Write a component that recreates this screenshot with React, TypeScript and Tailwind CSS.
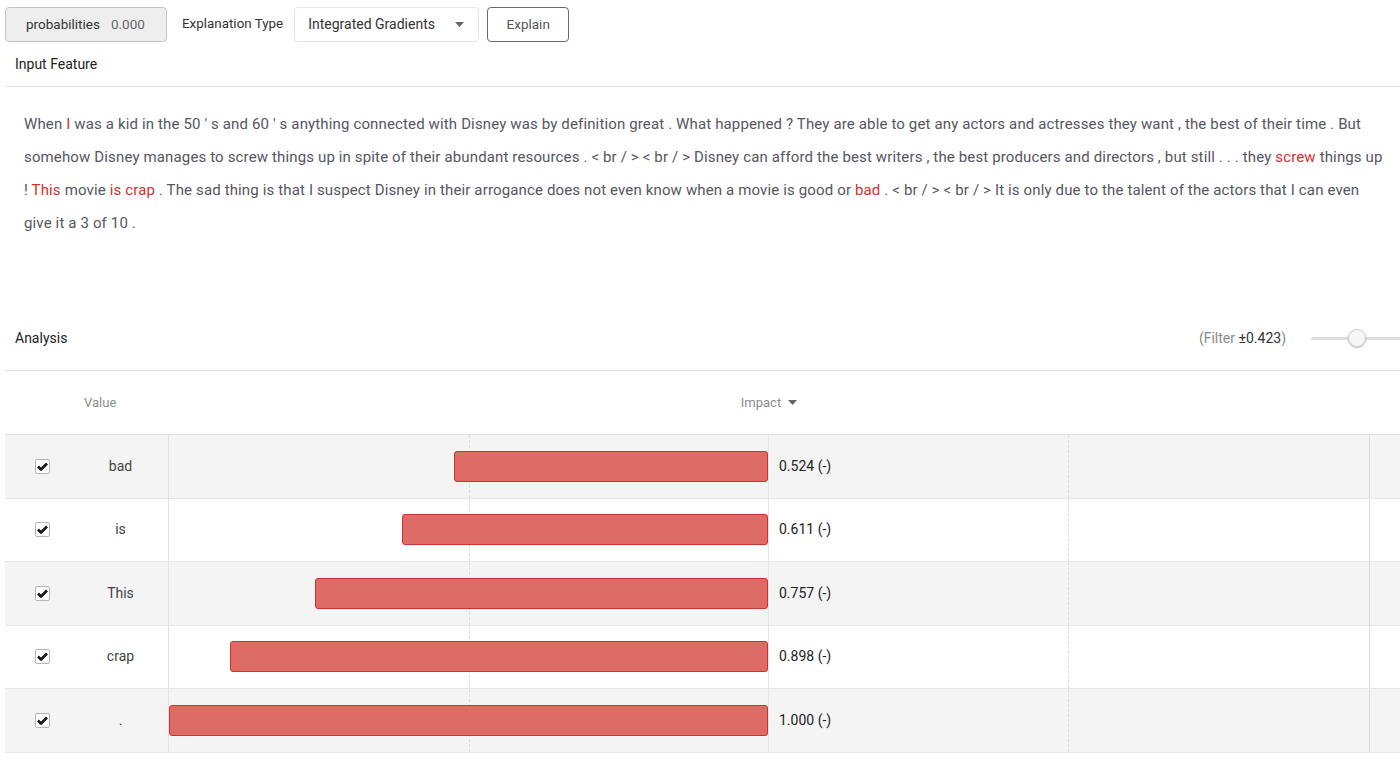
import React from "react";

const font = { fontFamily: "Roboto, 'Noto Sans', sans-serif" };

const rows = [
  { token: "bad", value: 0.524 },
  { token: "is", value: 0.611 },
  { token: "This", value: 0.757 },
  { token: "crap", value: 0.898 },
  { token: ".", value: 1.0 },
];

// words of the review; red ones carry weight
const text: [string, boolean][] = [
  ["When", false],
  ["I", true],
  ["was a kid in the 50 ' s and 60 ' s anything connected with Disney was by definition great . What happened ? They are able to get any actors and actresses they want , the best of their time . But somehow Disney manages to screw things up in spite of their abundant resources . < br / > < br / > Disney can afford the best writers , the best producers and directors , but still . . . they", false],
  ["screw", true],
  ["things up !", false],
  ["This", true],
  ["movie", false],
  ["is crap .", true],
  ["The sad thing is that I suspect Disney in their arrogance does not even know when a movie is good or", false],
  ["bad", true],
  [". < br / > < br / > It is only due to the talent of the actors that I can even give it a 3 of 10 .", false],
];

function CheckBox() {
  return (
    <div className="flex h-[15px] w-[15px] items-center justify-center rounded-[2px] border border-[#b5b5b5] bg-white">
      <svg width="11" height="9" viewBox="0 0 11 9">
        <path d="M1 4.6 L4 7.4 L10 1.4" fill="none" stroke="#1a1a1a" strokeWidth="2.8" strokeLinejoin="round" />
      </svg>
    </div>
  );
}

function Caret() {
  return (
    <svg width="9" height="5" viewBox="0 0 9 5">
      <path d="M0 0 L9 0 L4.5 5 Z" fill="#666" />
    </svg>
  );
}

function GridLines() {
  return (
    <div className="pointer-events-none absolute inset-0 flex">
      <div className="w-[301px] border-l border-[#e2e2e2]" />
      <div className="w-[299px] border-l border-dashed border-[#dcdcdc]" />
      <div className="w-[301px] border-l border-[#e6e6e6]" />
      <div className="w-[301px] border-l border-dashed border-[#dcdcdc]" />
      <div className="flex-1 border-l border-[#dadada]" />
    </div>
  );
}

export default function App() {
  return (
    <div className="min-h-[774px] w-[1400px] overflow-hidden bg-white text-[14px]" style={font}>
      {/* toolbar */}
      <div className="flex items-center pl-[5px] pt-[7px] text-[13px]">
        <div className="flex h-[35px] w-[162px] items-center gap-[11px] rounded-[4px] border border-[#c4c4c4] bg-[#eeeeee] pl-[20px] text-[13.5px] text-[#333]">
          <span>probabilities</span>
          <span className="text-[#666]">0.000</span>
        </div>
        <span className="ml-[15px] text-[13.4px] text-[#333]">Explanation Type</span>
        <div className="ml-[11px] flex h-[35px] w-[185px] items-center justify-between rounded-[4px] border border-[#e4e4e4] bg-white pl-[13px] pr-[14px] text-[14px] text-[#333]">
          <span>Integrated Gradients</span>
          <Caret />
        </div>
        <div className="ml-[8px] flex h-[35px] w-[82px] items-center justify-center rounded-[4px] border border-[#6a6a6a] text-[13.5px] text-[#555]">
          Explain
        </div>
      </div>

      <div className="ml-[5px]">
        <div className="flex h-[45px] items-center border-b border-[#e3e3e3] pl-[10px] text-[#222]">
          Input Feature
        </div>

        <div className="h-[219px] pl-[19px] pr-[13px] pt-[21px] text-[15px] leading-[33px] tracking-[0.14px] text-[#565660]">
          {text.map(([t, red], i) => (
            <React.Fragment key={i}>
              <span className={red ? "text-[#d32f2f]" : ""}>{t}</span>{" "}
            </React.Fragment>
          ))}
        </div>

        <div className="flex h-[65px] items-center justify-between border-b border-[#e3e3e3] pl-[10px]">
          <span className="text-[#222]">Analysis</span>
          <div className="flex items-center">
            <span className="text-[#8a8a8a]">
              (Filter <span className="text-[#333]">±0.423</span>)
            </span>
            <div className="relative ml-[25px] flex h-[20px] w-[89px] items-center">
              <div className="h-[3px] w-full rounded-l bg-[#dedede]" />
              <div className="absolute left-[37px] top-[1px] h-[18px] w-[18px] rounded-full border border-[#cfcfcf] bg-[#f7f7f7] shadow-[0_1px_2px_rgba(0,0,0,0.25)]" />
            </div>
          </div>
        </div>

        {/* table header */}
        <div className="flex h-[64px] items-center border-b border-[#e0e0e0] text-[13px] text-[#8c8c8c]">
          <div className="w-[74px]" />
          <div className="w-[89px] pl-[5px]">Value</div>
          <div className="flex w-[1202px] items-center justify-center gap-[7px]">
            <span>Impact</span>
            <Caret />
          </div>
        </div>

        {rows.map((r, i) => (
          <div
            key={r.token}
            className={`flex h-[63.5px] items-stretch border-b border-[#e6e6e6] ${i % 2 === 0 ? "bg-[#f4f4f4]" : "bg-white"}`}
          >
            <div className="flex w-[74px] items-center justify-center">
              <CheckBox />
            </div>
            <div className="flex w-[89px] items-center justify-center pr-[6px] text-[#444]">{r.token}</div>
            <div className="relative flex w-[1202px]">
              <GridLines />
              <div className="relative flex w-[600px] items-center justify-end">
                <div
                  className="h-[31px] rounded-[3px] border border-[#d32f2f] bg-[#dd6c66]"
                  style={{ width: `${Math.round(r.value * 599)}px` }}
                />
              </div>
              <div className="relative flex items-center pl-[11px] text-[#222]">
                {r.value.toFixed(3)} (-)
              </div>
            </div>
            <div className="flex-1" />
          </div>
        ))}
      </div>
    </div>
  );
}
